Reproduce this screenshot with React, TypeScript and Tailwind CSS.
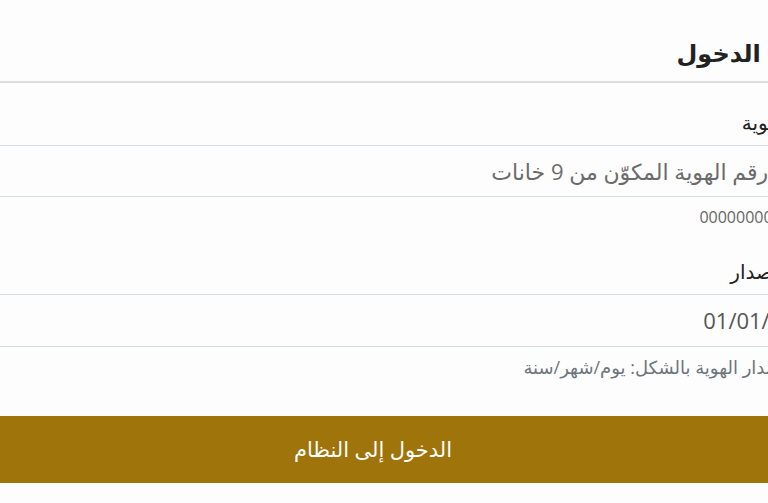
import React from "react";

export default function App() {
  const font = {
    fontFamily: '"Open Sans", "DejaVu Sans", sans-serif',
  };
  return (
    <div className="w-[768px] h-[503px] overflow-hidden bg-[#fdfdfd]" style={font}>
      <div dir="rtl" className="w-[900px]">
        <div className="h-[83px] flex items-end pb-[10px] pr-[51px] border-b-2 border-[#dddddd]">
          <h1 className="text-[24px] font-bold text-[#222] leading-[36px] whitespace-nowrap">تسجيل الدخول</h1>
        </div>
        <div className="h-[62px] flex items-end pb-[8px] pr-[73px]">
          <label className="text-[20px] text-[#222] leading-[28px] whitespace-nowrap">رقم الهوية</label>
        </div>
        <div className="h-[52px] border-y border-[#d5dbe1] flex items-center pr-[80px]">
          <span className="text-[22px] text-[#6b6b6b] whitespace-nowrap">أدخل رقم الهوية المكوّن من 9 خانات</span>
        </div>
        <div className="h-[44px] pt-[8px] pr-[80px]">
          <span className="text-[16px] text-[#666] whitespace-nowrap">مثال: 000000000</span>
        </div>
        <div className="h-[53px] flex items-end pb-[8px] pr-[65px]">
          <label className="text-[20px] text-[#222] leading-[28px] whitespace-nowrap">تاريخ الإصدار</label>
        </div>
        <div className="h-[53px] border-y border-[#d5dbe1] flex items-center pr-[80px]">
          <span className="text-[22px] text-[#555] whitespace-nowrap">01/01/2020</span>
        </div>
        <div className="h-[69px] pt-[7px] pr-[31px]">
          <span className="text-[18px] text-[#6c757d] whitespace-nowrap">أدخل تاريخ إصدار الهوية بالشكل: يوم/شهر/سنة</span>
        </div>
        <button className="w-full h-[67px] bg-[#9e740b] text-white text-[21px] pr-[154px]">
          الدخول إلى النظام
        </button>
      </div>
    </div>
  );
}
